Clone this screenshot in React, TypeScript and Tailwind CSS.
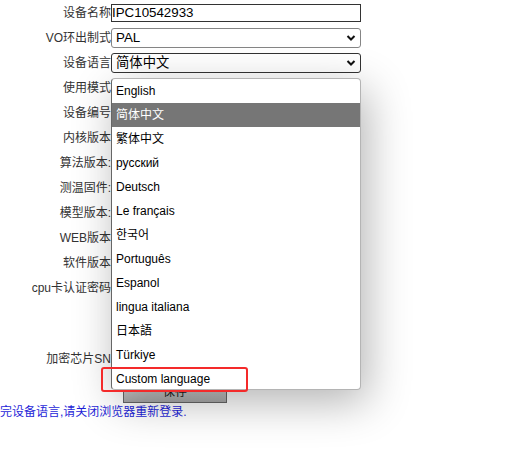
import React from "react";

const labels = [
  "使用模式",
  "设备编号",
  "内核版本",
  "算法版本:",
  "测温固件:",
  "模型版本:",
  "WEB版本",
  "软件版本",
];

const languages = [
  "English",
  "简体中文",
  "繁体中文",
  "русский",
  "Deutsch",
  "Le français",
  "한국어",
  "Português",
  "Espanol",
  "lingua italiana",
  "日本語",
  "Türkiye",
  "Custom language",
];

const Chevron = () => (
  <svg width="10" height="7" viewBox="0 0 10 7" className="absolute right-[4px] top-1/2 -translate-y-1/2">
    <path d="M1.5 1.5l3.5 3.5 3.5-3.5" fill="none" stroke="#111" strokeWidth="2" />
  </svg>
);

const Label = ({ children }: { children: React.ReactNode }) => (
  <div className="w-[111px] shrink-0 text-right text-[12px] leading-[16px] text-[#333] whitespace-nowrap">
    {children}
  </div>
);

const Select = ({ value, dark }: { value: string; dark?: boolean }) => (
  <div
    className={`relative w-[250px] h-[20px] rounded-[3px] border bg-white pl-[4px] text-[13.33px] leading-[18px] text-black ${
      dark ? "border-[#333]" : "border-[#858585]"
    }`}
  >
    {value}
    <Chevron />
  </div>
);

export default function App() {
  return (
    <div className="relative w-[516px] h-[449px] overflow-hidden bg-white font-['Liberation_Sans','Noto_Sans_CJK_SC',sans-serif]">
      <div className="flex flex-col">
        <div className="flex h-[25px] items-center">
          <Label>设备名称</Label>
          <div className="w-[250px] h-[18px] border border-[#333] text-[13.33px] leading-[16px] text-black">
            IPC10542933
          </div>
        </div>
        <div className="flex h-[25px] items-center">
          <Label>VO环出制式</Label>
          <Select value="PAL" />
        </div>
        <div className="flex h-[25px] items-center">
          <Label>设备语言</Label>
          <Select value="简体中文" dark />
        </div>
        {labels.map((l) => (
          <div key={l} className="flex h-[25px] items-center">
            <Label>{l}</Label>
          </div>
        ))}
        <div className="flex h-[71px] items-start">
          <div className="flex h-[25px] items-center">
            <Label>cpu卡认证密码</Label>
          </div>
        </div>
        <div className="flex h-[25px] items-center">
          <Label>加密芯片SN</Label>
        </div>
        <div className="mt-[10px] ml-[123px] flex h-[22px] w-[104px] items-center justify-center border border-[#666] bg-gradient-to-b from-[#e4e4e4] to-[#a9a9a9] text-[12px] text-[#222]">
          保存
        </div>
        <div className="mt-[1px] text-[12px] leading-[16px] text-[#1f1fd8] whitespace-nowrap">
          完设备语言,请关闭浏览器重新登录.
        </div>
      </div>

      <div className="absolute left-[111px] top-[78px] w-[250px] h-[312px] rounded-[4px] border border-[#b4b4b4] border-l-[#666] bg-white shadow-[6px_12px_44px_rgba(0,0,0,0.3)]">
        {languages.map((lang) => (
          <div
            key={lang}
            className={`flex h-[24px] items-center pl-[4px] text-[12px] ${
              lang === "简体中文" ? "bg-[#767676] text-white" : "text-black"
            }`}
          >
            {lang}
          </div>
        ))}
      </div>

      <div className="absolute left-[101px] top-[367px] w-[147px] h-[25px] rounded-[3px] border-2 border-[#f42a2a]" />
    </div>
  );
}
